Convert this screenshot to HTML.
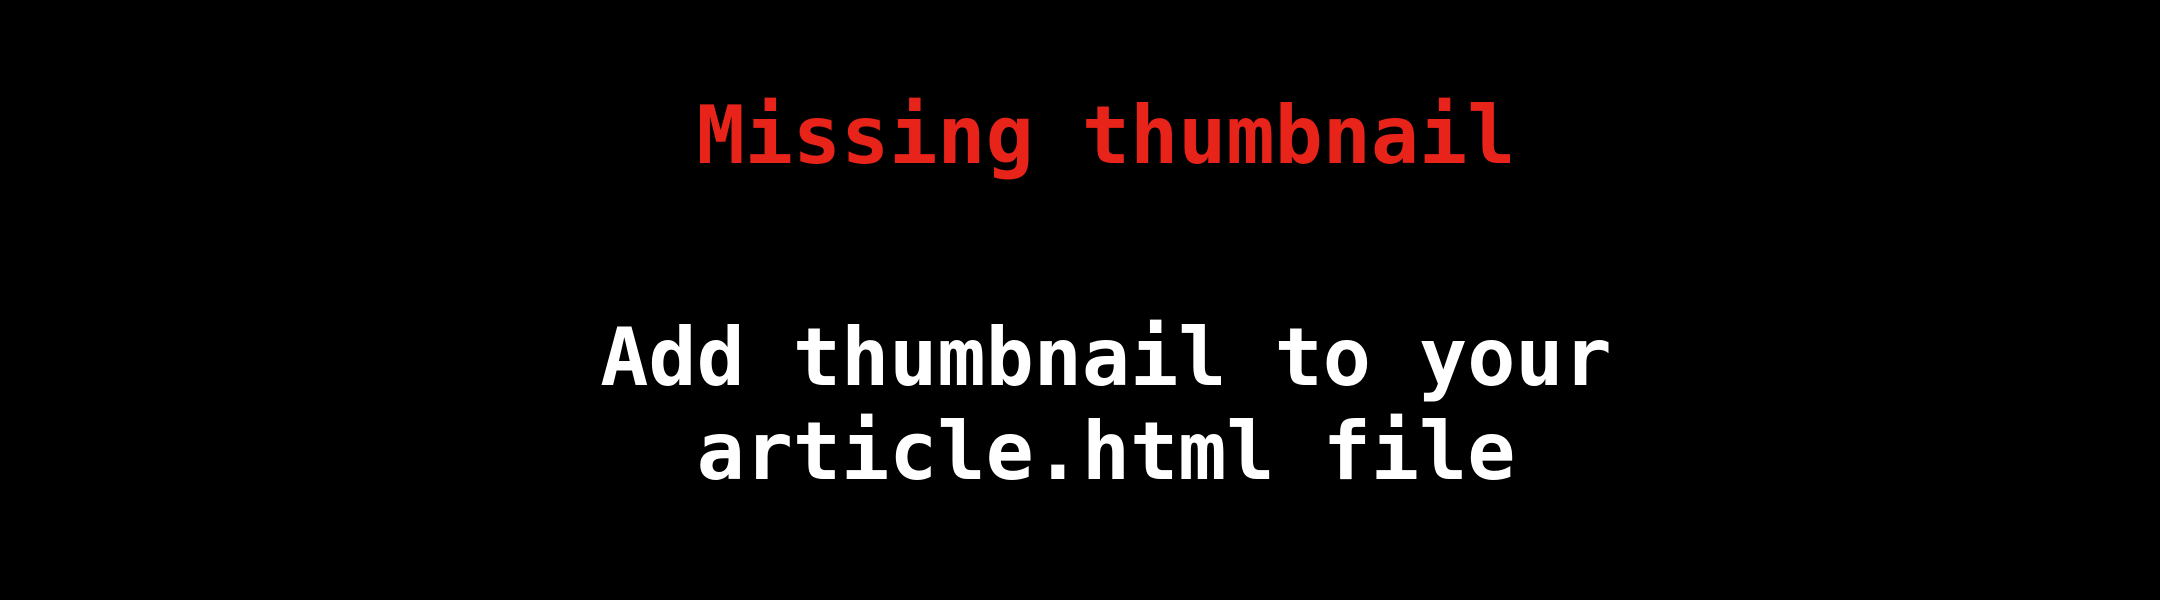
<!DOCTYPE html>
<html><head><style>
html,body{margin:0;padding:0;background:#000;width:2160px;height:600px;overflow:hidden}
.t{position:absolute;left:26px;width:2160px;text-align:center;font-family:"DejaVu Sans Mono","Liberation Mono",monospace;font-weight:bold;font-size:80px;line-height:94px;white-space:pre}
</style></head><body>
<div class="t" style="top:89px;color:#e8231a">Missing thumbnail</div>
<div class="t" style="top:311px;color:#fff">Add thumbnail to your
article.html file</div>
</body></html>
